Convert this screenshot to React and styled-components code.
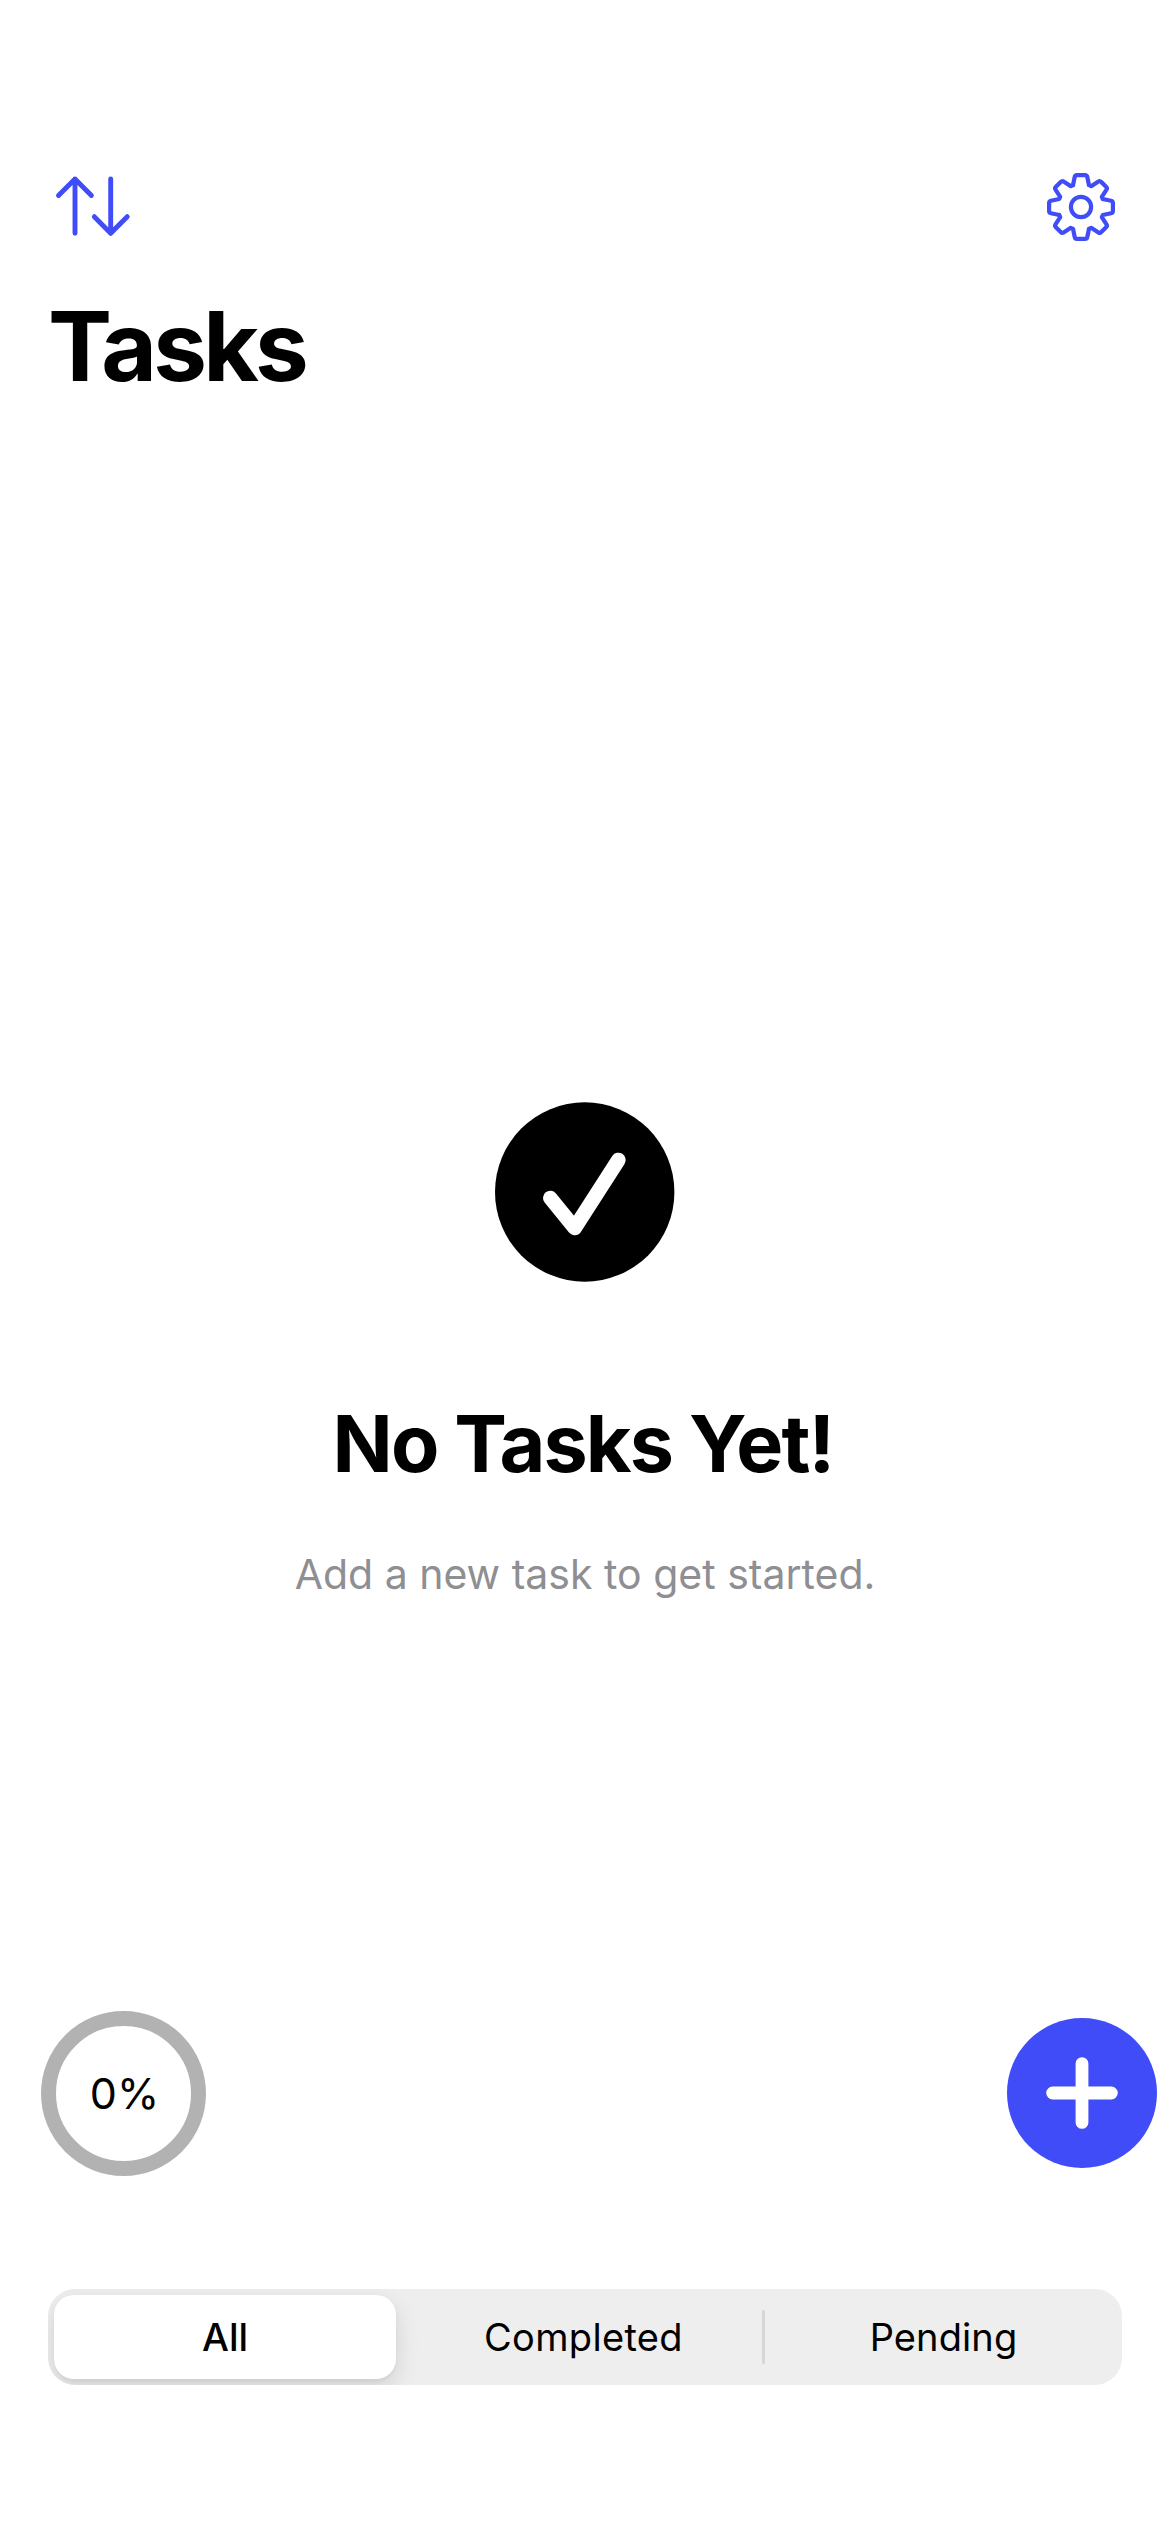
import React, { useState } from "react";
import styled, { createGlobalStyle } from "styled-components";

const accent = "#3f4cf7";

const GlobalStyle = createGlobalStyle`
  *, *::before, *::after { box-sizing: border-box; }
  body { margin: 0; background: #ffffff; }
  button { border: 0; padding: 0; background: none; font: inherit; color: inherit; }
  svg { display: block; }
`;

const Screen = styled.main`
  width: 1170px;
  height: 2532px;
  overflow: hidden;
  display: flex;
  flex-direction: column;
  padding-top: 162px;
  background: #ffffff;
  color: #000000;
  font-family: Inter, "Liberation Sans", sans-serif;
`;

const Toolbar = styled.header`
  height: 90px;
  padding: 0 44px 0 48px;
  display: flex;
  align-items: center;
  justify-content: space-between;
`;

const IconButton = styled.button`
  height: 90px;
  display: flex;
  align-items: center;
  color: ${accent};
`;

const Title = styled.h1`
  margin: 36px 0 0 48px;
  font-size: 96px;
  line-height: 116px;
  font-weight: 700;
  letter-spacing: -3.8px;
`;

const EmptyState = styled.section`
  margin-top: 698px;
  display: flex;
  flex-direction: column;
  align-items: center;
`;

const EmptyTitle = styled.h2`
  margin: 113px 0 0;
  padding-right: 4px;
  font-size: 79px;
  line-height: 96px;
  font-weight: 700;
  letter-spacing: -1.86px;
  white-space: nowrap;
`;

const EmptyHint = styled.p`
  margin: 58px 0 0;
  font-size: 41px;
  line-height: 50px;
  color: #8e8e93;
  white-space: nowrap;
`;

const Actions = styled.div`
  margin-top: auto;
  height: 166px;
  padding: 0 13px 0 41px;
  display: flex;
  align-items: center;
  justify-content: space-between;
`;

const ProgressRing = styled.div`
  width: 165px;
  height: 165px;
  padding-left: 2px;
  border: 15px solid #b2b2b2;
  border-radius: 50%;
  display: flex;
  align-items: center;
  justify-content: center;
  font-size: 43px;
`;

const AddButton = styled.button`
  width: 150px;
  height: 150px;
  border-radius: 50%;
  background: ${accent};
  display: flex;
  align-items: center;
  justify-content: center;
`;

const Segmented = styled.div`
  margin: 113px 48px 147px;
  height: 96px;
  padding-left: 6px;
  border-radius: 27px;
  background: #eeeeee;
  display: flex;
  align-items: center;
  overflow: hidden;
`;

const Segment = styled.button`
  flex: ${(p) => (p.$active ? "0 0 342px" : "1 1 0")};
  margin-right: ${(p) => (p.$active ? "6px" : "0")};
  height: 84px;
  border-radius: 20px;
  font-size: 38px;
  letter-spacing: ${(p) => p.$tracking}px;
  font-weight: ${(p) => (p.$active ? 500 : 400)};
  background: ${(p) => (p.$active ? "#ffffff" : "transparent")};
  box-shadow: ${(p) =>
    p.$active ? "0 9px 24px rgba(0, 0, 0, 0.12), 0 3px 3px rgba(0, 0, 0, 0.04)" : "none"};
`;

const Divider = styled.span`
  width: 3px;
  height: 54px;
  border-radius: 2px;
  background: ${(p) => (p.$visible ? "#d6d6d7" : "transparent")};
`;

const SortIcon = () => (
  <svg width="90" height="66" viewBox="0 0 90 66" fill="none" stroke="currentColor"
    strokeWidth="4.9" strokeLinecap="round" strokeLinejoin="round">
    <path d="M27 59.3V5M10.5 21.5 27 5 43.4 21.5M62.7 5V59.3M46.3 42.7 62.7 59.3 79.2 42.7" />
  </svg>
);

const toothPath =
  "M-8-21.8-6.3-30Q-5.9-31.9-4-31.9H4Q5.9-31.9 6.3-30L8-21.8 10.2-20.8 17.4-25.5Q18.9-26.5 20.3-25.1L25.1-20.3Q26.5-18.9 25.5-17.4L20.8-10.2 21.8-8";

const GearIcon = () => (
  <svg width="90" height="90" viewBox="-45 -45 90 90" fill="none" stroke="currentColor"
    strokeWidth="4.2" strokeLinecap="round" strokeLinejoin="round">
    {[0, 90, 180, 270].map((angle) => (
      <path key={angle} d={toothPath} transform={`rotate(${angle})`} />
    ))}
    <circle r="10.1" />
  </svg>
);

const CheckBadge = () => (
  <svg width="180" height="180" viewBox="0 0 180 180" fill="none">
    <circle cx="89.7" cy="90" r="89.7" fill="#000000" />
    <path d="M55.3 96 79.7 126 123.4 58" stroke="#ffffff" strokeWidth="14.6"
      strokeLinecap="round" strokeLinejoin="round" />
  </svg>
);

const PlusIcon = () => (
  <svg width="72" height="72" viewBox="0 0 72 72" stroke="#ffffff" strokeWidth="12.8"
    strokeLinecap="round">
    <path d="M36 6.6V65.4M6.6 36H65.4" />
  </svg>
);

const filters = [
  { name: "All", tracking: 0 },
  { name: "Completed", tracking: 0.33 },
  { name: "Pending", tracking: 0.1 },
];

export default function App() {
  const [active, setActive] = useState(0);
  return (
    <>
      <GlobalStyle />
      <Screen>
        <Toolbar>
          <IconButton aria-label="Sort"><SortIcon /></IconButton>
          <IconButton aria-label="Settings"><GearIcon /></IconButton>
        </Toolbar>
        <Title>Tasks</Title>
        <EmptyState>
          <CheckBadge />
          <EmptyTitle>No Tasks Yet!</EmptyTitle>
          <EmptyHint>Add a new task to get started.</EmptyHint>
        </EmptyState>
        <Actions>
          <ProgressRing>0%</ProgressRing>
          <AddButton aria-label="Add task"><PlusIcon /></AddButton>
        </Actions>
        <Segmented>
          {filters.map((filter, i) => (
            <React.Fragment key={filter.name}>
              {i > 0 && <Divider $visible={active !== i && active !== i - 1} />}
              <Segment $active={active === i} $tracking={filter.tracking}
                onClick={() => setActive(i)}>
                {filter.name}
              </Segment>
            </React.Fragment>
          ))}
        </Segmented>
      </Screen>
    </>
  );
}
